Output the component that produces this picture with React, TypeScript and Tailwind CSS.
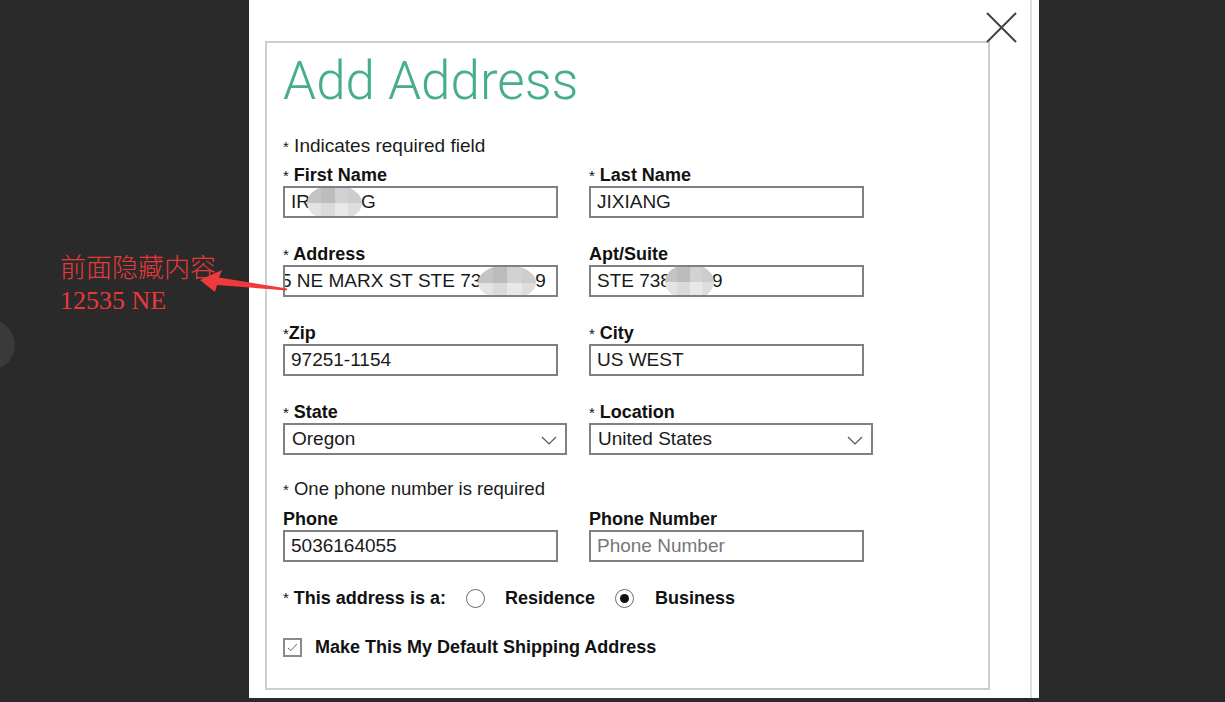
import type { ReactNode } from "react";

const SANS = "font-['Liberation_Sans',Arial,sans-serif]";

function Star() {
  return <span className="text-[15px] font-normal">*</span>;
}

function Label({ text, req, tight }: { text: string; req?: boolean; tight?: boolean }) {
  return (
    <div className="h-[22px] text-[18px] leading-[22px] font-bold text-[#111] whitespace-nowrap">
      {req && <Star />}
      {req && !tight ? " " : ""}
      {text}
    </div>
  );
}

// pixelated privacy blur drawn over a field
function Blob({ className }: { className: string }) {
  const cells = ["#c4c4c4", "#bcbcbc", "#d2d2d2", "#cdcdcd", "#e4e4e4", "#dadada", "#e8e8e8", "#dedede"];
  return (
    <div className={`absolute grid grid-cols-4 grid-rows-2 overflow-hidden rounded-[50%] ${className}`}>
      {cells.map((c, i) => (
        <div key={i} style={{ background: c }} />
      ))}
    </div>
  );
}

function Box({ children, wide, className = "" }: { children: ReactNode; wide?: boolean; className?: string }) {
  return (
    <div
      className={`relative flex h-[32px] items-center overflow-hidden border-2 border-[#808080] bg-white text-[19px] text-[#1a1a1a] whitespace-nowrap ${
        wide ? "w-[284px]" : "w-[275px]"
      } ${className}`}
    >
      {children}
    </div>
  );
}

function Chevron() {
  return (
    <svg viewBox="0 0 16 9" className="absolute right-[8px] top-[11px] h-[9px] w-[16px]" fill="none">
      <path d="M1 1l7 7 7-7" stroke="#555" strokeWidth="1.2" />
    </svg>
  );
}

function Radio({ on }: { on?: boolean }) {
  return (
    <span className="flex h-[19px] w-[19px] items-center justify-center rounded-full border border-[#6b6b6b] bg-white">
      {on && <span className="h-[9px] w-[9px] rounded-full bg-[#111]" />}
    </span>
  );
}

function Annotation() {
  return (
    <>
      <div className="absolute left-[60px] top-[254px] text-[26px] leading-[30px] text-[#e8393a] font-['Liberation_Serif','Noto_Sans_CJK_SC',serif] font-light">
        <div>前面隐藏内容</div>
        <div className="mt-[2px]">12535 NE</div>
      </div>
      <svg className="absolute left-0 top-0 h-[702px] w-[1225px] pointer-events-none" viewBox="0 0 1225 702">
        <polygon
          points="200,280 222,270 219,277.5 287,288.5 287,290.5 217,285 215,292"
          fill="#ee3a3a"
        />
      </svg>
    </>
  );
}

export default function App() {
  return (
    <div className={`relative h-[702px] w-[1225px] overflow-hidden bg-[#2a2a2a] ${SANS}`}>
      <div className="absolute left-[-35px] top-[320px] h-[50px] w-[50px] rounded-full bg-[#3a3a3a]" />

      <div className="ml-[249px] flex h-[698px] w-[790px] bg-white">
        <div className="h-full w-[783px] border-r-2 border-[#dedede] pl-[16px] pt-[41px]">
          <div className="h-[649px] w-[725px] border-2 border-[#cecece] pl-[16px]">
            <h1 className="mt-[12px] h-[53px] text-[53px] leading-none font-light text-[#47ad8b] font-['Roboto',sans-serif]">
              Add Address
            </h1>

            <div className="mt-[27px] h-[22px] text-[19px] leading-[22px] text-[#1a1a1a]">
              <Star /> Indicates required field
            </div>

            <div className="mt-[7px] grid grid-cols-[306px_1fr] gap-y-[25px]">
              <div>
                <Label text="First Name" req />
                <Box>
                  <span className="pl-[6px]">IR</span>
                  <span className="inline-block w-[51px]" />
                  <span>G</span>
                  <Blob className="left-[22px] top-[-3px] h-[36px] w-[55px]" />
                </Box>
              </div>
              <div>
                <Label text="Last Name" req />
                <Box>
                  <span className="pl-[6px]">JIXIANG</span>
                </Box>
              </div>

              <div>
                <Label text="Address" req />
                <Box>
                  <span className="ml-[-4px]">5 NE MARX ST STE 73</span>
                  <span className="inline-block w-[54px]" />
                  <span>9</span>
                  <Blob className="left-[193px] top-[-2px] h-[35px] w-[58px]" />
                </Box>
              </div>
              <div>
                <Label text="Apt/Suite" />
                <Box>
                  <span className="pl-[6px]">STE 738</span>
                  <span className="inline-block w-[41px]" />
                  <span>9</span>
                  <Blob className="left-[74px] top-[-3px] h-[36px] w-[49px]" />
                </Box>
              </div>

              <div>
                <Label text="Zip" req tight />
                <Box>
                  <span className="pl-[6px]">97251-1154</span>
                </Box>
              </div>
              <div>
                <Label text="City" req />
                <Box>
                  <span className="pl-[6px]">US WEST</span>
                </Box>
              </div>

              <div>
                <Label text="State" req />
                <Box wide>
                  <span className="pl-[7px]">Oregon</span>
                  <Chevron />
                </Box>
              </div>
              <div>
                <Label text="Location" req />
                <Box wide>
                  <span className="pl-[7px]">United States</span>
                  <Chevron />
                </Box>
              </div>
            </div>

            <div className="mt-[23px] h-[22px] text-[18.5px] leading-[22px] text-[#1a1a1a]">
              <Star /> One phone number is required
            </div>

            <div className="mt-[8px] grid grid-cols-[306px_1fr]">
              <div>
                <Label text="Phone" />
                <Box>
                  <span className="pl-[6px]">5036164055</span>
                </Box>
              </div>
              <div>
                <Label text="Phone Number" />
                <Box>
                  <span className="pl-[6px] text-[#777]">Phone Number</span>
                </Box>
              </div>
            </div>

            <div className="mt-[25px] flex h-[22px] items-center text-[18px] font-bold text-[#111]">
              <Star />
              <span className="ml-[5px]">This address is a:</span>
              <span className="ml-[20px]">
                <Radio />
              </span>
              <span className="ml-[20px]">Residence</span>
              <span className="ml-[20px]">
                <Radio on />
              </span>
              <span className="ml-[21px]">Business</span>
            </div>

            <div className="mt-[27px] flex h-[22px] items-center text-[18px] font-bold text-[#111]">
              <span className="flex h-[19px] w-[19px] items-center justify-center border-2 border-[#8a8a8a]">
                <svg viewBox="0 0 12 10" className="h-[9px] w-[11px]" fill="none">
                  <path d="M1 5.5l3.2 3L11 1" stroke="#666" strokeWidth="1.1" />
                </svg>
              </span>
              <span className="ml-[13px]">Make This My Default Shipping Address</span>
            </div>
          </div>
        </div>
        <div className="w-[7px]" />
      </div>

      <svg className="absolute left-[985px] top-[11px] h-[33px] w-[33px]" viewBox="0 0 33 33" fill="none">
        <path d="M2 2l29 29M31 2L2 31" stroke="#444" strokeWidth="2" />
      </svg>

      <Annotation />
    </div>
  );
}
